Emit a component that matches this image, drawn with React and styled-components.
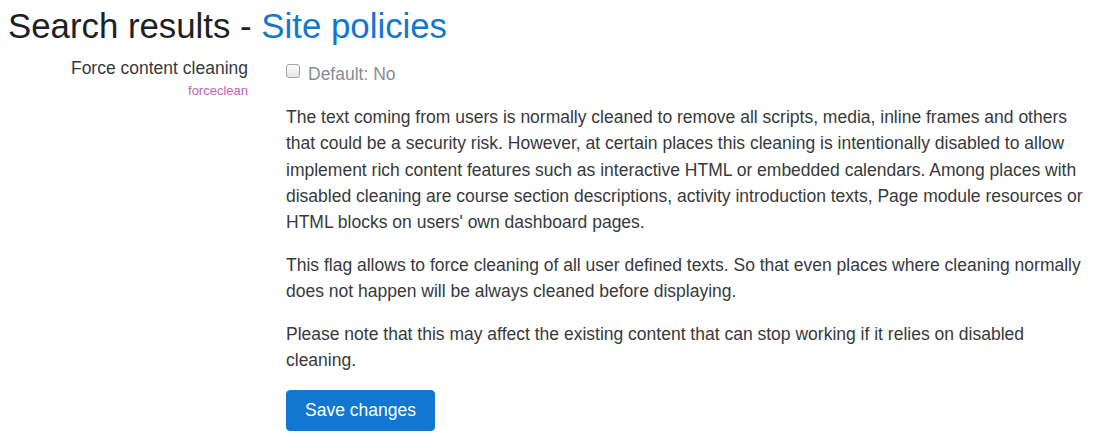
import React from 'react';
import styled, { createGlobalStyle } from 'styled-components';

const GlobalStyle = createGlobalStyle`
  body {
    margin: 0;
    background: #fff;
    font-family: "Liberation Sans", Arial, sans-serif;
    color: #373a3c;
  }
`;

const Page = styled.div`
  padding: 0 8px;
`;

const Title = styled.h2`
  margin: 0;
  padding-top: 5px;
  font-size: 34.8px;
  font-weight: 400;
  line-height: 42px;
  color: #1d2125;
`;

const Link = styled.a`
  color: #1177d1;
  text-decoration: none;
`;

const Row = styled.div`
  display: grid;
  grid-template-columns: 240px 1fr;
  column-gap: 38px;
  margin-top: 7px;
`;

const LabelCol = styled.div`
  padding-top: 1px;
  text-align: right;
`;

const Label = styled.label`
  display: block;
  font-size: 17.5px;
  line-height: 26.25px;
  color: #373a3c;
`;

const ShortName = styled.div`
  margin-top: 1px;
  font-size: 13px;
  line-height: 17px;
  color: #c060c0;
`;

const Content = styled.div`
  font-size: 17.5px;
  line-height: 26.25px;
  max-width: 804px;
`;

const Check = styled.label`
  display: flex;
  align-items: flex-start;
  gap: 8px;
  color: #868e96;
  margin-top: 7px;
  margin-bottom: 16.75px;
`;

const Box = styled.span`
  box-sizing: border-box;
  flex: none;
  width: 14px;
  height: 14px;
  margin-top: 3px;
  border: 1px solid #a4a4a4;
  border-radius: 3px;
  background: linear-gradient(#fbfbfb, #e6e6e6);
`;

const Para = styled.p`
  margin: 0 0 16.5px;
`;

const Button = styled.button`
  display: block;
  margin-top: 3.5px;
  padding: 0 18px;
  height: 41px;
  font-family: inherit;
  font-size: 17.5px;
  color: #fff;
  background: #1177d1;
  border: 1px solid #1177d1;
  border-radius: 4px;
`;

export default function App() {
  return (
    <Page>
      <GlobalStyle />
      <Title>Search results - <Link href="#">Site policies</Link></Title>
      <Row>
        <LabelCol>
          <Label>Force content cleaning</Label>
          <ShortName>forceclean</ShortName>
        </LabelCol>
        <Content>
          <Check><Box />Default: No</Check>
          <Para>
            The text coming from users is normally cleaned to remove all scripts, media, inline frames and others
            that could be a security risk. However, at certain places this cleaning is intentionally disabled to allow
            implement rich content features such as interactive HTML or embedded calendars. Among places with
            disabled cleaning are course section descriptions, activity introduction texts, Page module resources or
            HTML blocks on users' own dashboard pages.
          </Para>
          <Para>
            This flag allows to force cleaning of all user defined texts. So that even places where cleaning normally
            does not happen will be always cleaned before displaying.
          </Para>
          <Para>
            Please note that this may affect the existing content that can stop working if it relies on disabled
            cleaning.
          </Para>
          <Button>Save changes</Button>
        </Content>
      </Row>
    </Page>
  );
}
